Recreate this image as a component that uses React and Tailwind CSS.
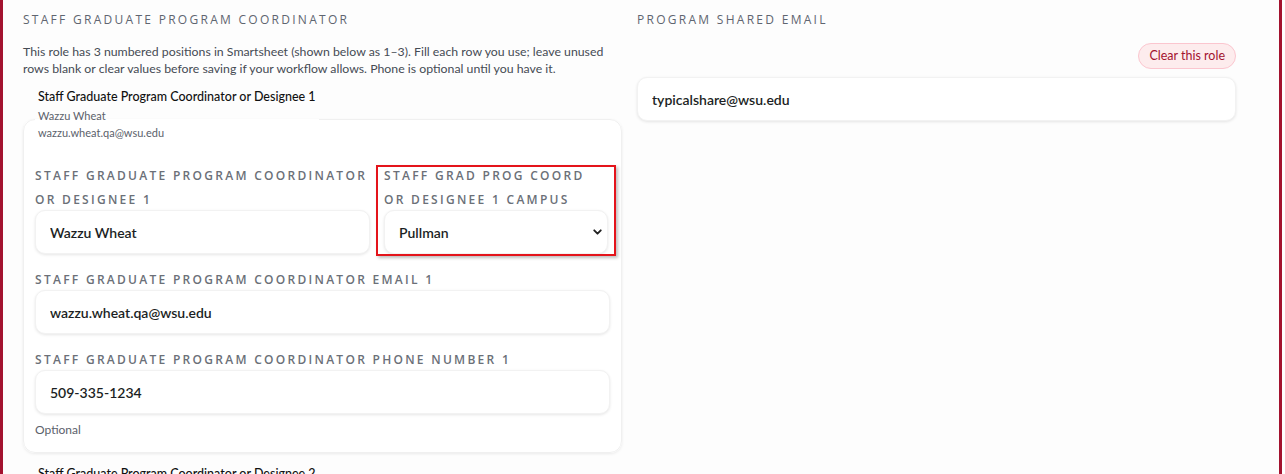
import React, { useState } from "react";
import { ChevronDown } from "lucide-react";

const labelCls =
  "block text-[12px] leading-[24px] font-semibold uppercase tracking-[0.19em] text-[#6b7078] font-['Open_Sans',sans-serif]";

const inputCls =
  "w-full h-[44px] rounded-[10px] bg-white px-[14px] text-[14px] font-semibold text-[#1c1f24] border border-[#f2f2f2] shadow-[0_1px_3px_rgba(0,0,0,0.1)] outline-none";

const Field = ({ label, value, onChange }) => (
  <div>
    <label className={labelCls}>{label}</label>
    <input className={inputCls + " -mt-[2px]"} value={value} onChange={(e) => onChange(e.target.value)} />
  </div>
);

const App = () => {
  const [name, setName] = useState("Wazzu Wheat");
  const [campus, setCampus] = useState("Pullman");
  const [email, setEmail] = useState("wazzu.wheat.qa@wsu.edu");
  const [phone, setPhone] = useState("509-335-1234");
  const [shared, setShared] = useState("typicalshare@wsu.edu");

  return (
    <div className="w-[1285px] h-[474px] overflow-hidden bg-white font-['Lato',sans-serif]">
      <div className="w-[1282px] h-full bg-[#fdfdfd] border-x-[3px] border-[#a3122f] pl-[20px] pt-[13px]">
        <div className="grid grid-cols-[599px_599px] gap-x-[15px]">
          {/* Left column: numbered coordinator positions */}
          <div>
            <h2 className="text-[12px] leading-[14px] font-medium uppercase tracking-[0.19em] text-[#5f6570] font-['Open_Sans',sans-serif]">
              Staff Graduate Program Coordinator
            </h2>
            <p className="mt-[16px] text-[12.3px] leading-[17px] text-[#454b54]">
              This role has 3 numbered positions in Smartsheet (shown below as 1–3). Fill each row you use; leave unused
              rows blank or clear values before saving if your workflow allows. Phone is optional until you have it.
            </p>

            <fieldset className="mt-[11px] rounded-[12px] border border-[#f0f0f0] bg-white px-[11px] pt-[13px] pb-[14px] shadow-[0_1px_3px_rgba(0,0,0,0.08)]">
              <legend className="px-[3px] pb-[10px]">
                <div className="text-[12.5px] leading-[18px] font-medium text-[#111]">
                  Staff Graduate Program Coordinator or Designee 1
                </div>
                <div className="mt-[1px] text-[11px] leading-[17px] text-[#5b616b]">Wazzu Wheat</div>
                <div className="text-[11px] leading-[17px] text-[#5b616b]">wazzu.wheat.qa@wsu.edu</div>
              </legend>

              <div className="grid grid-cols-[335px_224px] gap-x-[14px]">
                <Field label="Staff Graduate Program Coordinator or Designee 1" value={name} onChange={setName} />
                <div className="relative">
                  <label className={labelCls}>Staff Grad Prog Coord or Designee 1 Campus</label>
                  <div className="relative -mt-[2px]">
                    <select
                      className={inputCls + " appearance-none pr-[30px]"}
                      value={campus}
                      onChange={(e) => setCampus(e.target.value)}
                    >
                      <option>Pullman</option>
                      <option>Spokane</option>
                      <option>Tri-Cities</option>
                      <option>Vancouver</option>
                      <option>Everett</option>
                    </select>
                    <ChevronDown
                      size={13}
                      strokeWidth={3.5}
                      className="pointer-events-none absolute right-[4px] top-1/2 -translate-y-1/2 text-[#222]"
                    />
                  </div>
                  {/* highlight frame */}
                  <div className="pointer-events-none absolute -left-[8px] -right-[8px] top-[1px] -bottom-[2px] border-2 border-[#e4141b] shadow-[2px_2px_3px_rgba(0,0,0,0.25)]" />
                </div>
              </div>

              <div className="mt-[14px]">
                <Field label="Staff Graduate Program Coordinator Email 1" value={email} onChange={setEmail} />
              </div>
              <div className="mt-[14px]">
                <Field label="Staff Graduate Program Coordinator Phone Number 1" value={phone} onChange={setPhone} />
              </div>
              <div className="mt-[8px] text-[12px] leading-[16px] text-[#5b616b]">Optional</div>
            </fieldset>

            <div className="mt-[12px] pl-[15px] text-[12.5px] leading-[18px] font-medium text-[#111]">
              Staff Graduate Program Coordinator or Designee 2
            </div>
          </div>

          {/* Right column: shared inbox */}
          <div>
            <h2 className="text-[12px] leading-[14px] font-medium uppercase tracking-[0.19em] text-[#5f6570] font-['Open_Sans',sans-serif]">
              Program Shared Email
            </h2>
            <div className="mt-[16px] flex justify-end">
              <button
                className="h-[26px] rounded-full border border-[#fbc6cf] bg-[#fdeced] px-[10px] text-[12.5px] text-[#a3122f]"
                onClick={() => setShared("")}
              >
                Clear this role
              </button>
            </div>
            <input
              className={inputCls + " mt-[8px]"}
              value={shared}
              onChange={(e) => setShared(e.target.value)}
            />
          </div>
        </div>
      </div>
    </div>
  );
};

export default App;
